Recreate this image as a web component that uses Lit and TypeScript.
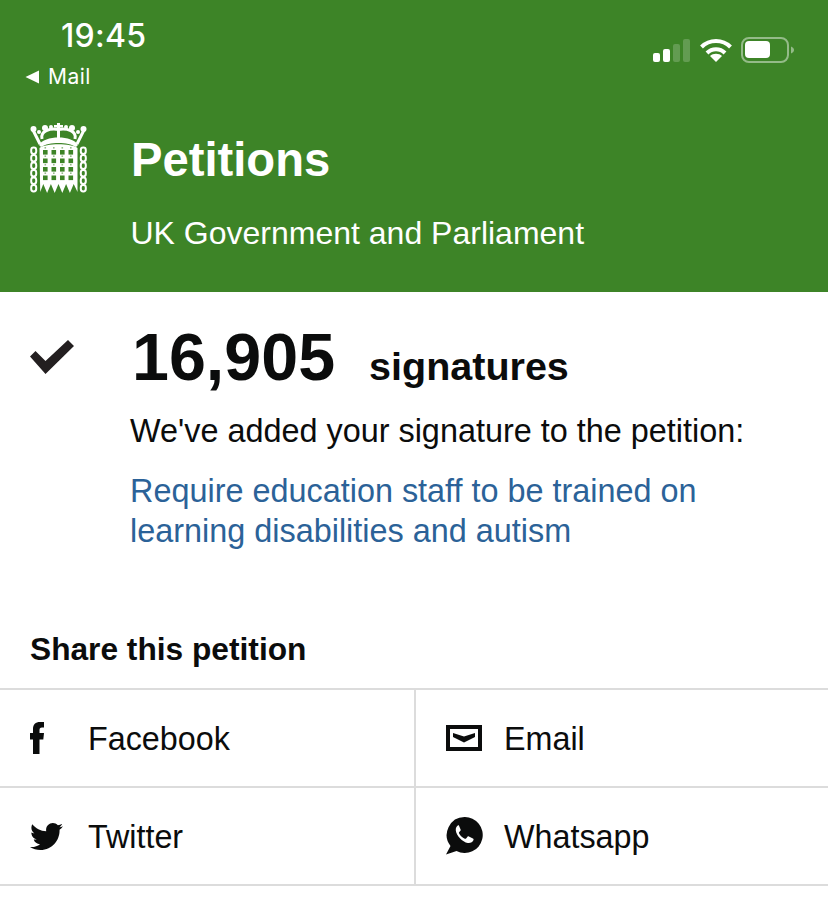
import { LitElement, html, css, svg } from "lit";
import { customElement } from "lit/decorators.js";

const GREEN = "#3d8427";
const holeXs = [13, 21.500, 30, 38.500];
const holeYs = [27, 35.500, 44, 52.500];

const portcullis = () => [
  ...holeYs.flatMap((y) =>
    holeXs.map((x) => svg`<rect x=${x} y=${y} width="4.600" height="4.600" fill=${GREEN}/>`)
  ),
  ...[24.800, 33.200, 41.700, 50.200].flatMap((y) =>
    [15.300, 23.800, 32.300, 40.800].map(
      (x) => svg`<rect x=${x - 0.8} y=${y - 0.8} width="1.600" height="1.600" fill=${GREEN} fill-opacity=".55"/>`
    )
  ),
];

const chain = (x: number) =>
  [0, 1, 2, 3, 4, 5].map(
    (i) => svg`<rect x=${x} y=${24.500 + i * 7.500} width="5" height="6.500" rx="2.400" fill="none" stroke="#fff" stroke-width="2"/>`
  );

@customElement("app-root")
export class AppRoot extends LitElement {
  static styles = css`
    :host {
      display: block;
      width: 828px;
      height: 899px;
      background: #fff;
      font-family: "Liberation Sans", Arial, sans-serif;
      color: #0b0c0c;
      overflow: hidden;
    }
    .header {
      height: 292px;
      box-sizing: border-box;
      background: #3d8427;
      color: #fff;
      display: flex;
      flex-direction: column;
    }
    .status {
      height: 112px;
      display: flex;
      justify-content: space-between;
      padding: 0 34px 0 25px;
    }
    .status-left {
      display: flex;
      flex-direction: column;
    }
    .time {
      font-family: Inter, sans-serif;
      font-size: 32px;
      font-weight: 500;
      line-height: 36px;
      padding: 18px 0 0 36px;
      letter-spacing: 0.3px;
    }
    .back {
      display: flex;
      align-items: center;
      gap: 8px;
      font-family: Inter, sans-serif;
      font-size: 21px;
      line-height: 24px;
      margin-top: 11px;
      letter-spacing: 0.45px;
    }
    .indicators {
      display: flex;
      align-items: center;
      gap: 9px;
      height: 30px;
      margin-top: 35px;
    }
    .brand {
      display: grid;
      grid-template-columns: 131px 1fr;
    }
    .logo {
      margin: 11px 0 0 30px;
      display: block;
    }
    .title {
      font-size: 47.200px;
      font-weight: 700;
      line-height: 54px;
      margin: 21px 0 0;
    }
    .sub {
      font-size: 32px;
      line-height: 38px;
      margin: 27px 0 0 -0.5px;
    }
    .main {
      display: grid;
      grid-template-columns: 131px 1fr;
      padding-top: 32px;
    }
    .check {
      margin: 16px 0 0 30px;
      display: block;
    }
    .count {
      display: flex;
      align-items: baseline;
      gap: 34px;
      line-height: 66px;
      font-weight: 700;
      padding-left: 1px;
    }
    .num {
      font-size: 66.400px;
    }
    .word {
      font-size: 39.500px;
    }
    .added {
      font-size: 32.400px;
      line-height: 40px;
      margin: 12px 0 0 -1px;
    }
    .link {
      display: block;
      color: #2b6298;
      font-size: 32.400px;
      line-height: 40px;
      margin: 20px 0 0 -1px;
      text-decoration: none;
    }
    .share {
      font-size: 31.700px;
      font-weight: 700;
      line-height: 36px;
      margin: 80px 0 21px 30px;
    }
    .grid {
      display: grid;
      grid-template-columns: 416px 1fr;
      border-top: 2px solid #dcdcdc;
    }
    .cell {
      height: 98px;
      box-sizing: border-box;
      border-bottom: 2px solid #dcdcdc;
      display: flex;
      align-items: center;
      font-size: 32.300px;
    }
    .cell.left {
      border-right: 2px solid #dcdcdc;
    }
    .cell span {
      padding-top: 2px;
    }
    .ico {
      width: 88px;
      flex: none;
      display: flex;
      padding-left: 30px;
      box-sizing: border-box;
    }
  `;

  render() {
    return html`
      <div class="header">
        <div class="status">
          <div class="status-left">
            <div class="time">19:45</div>
            <div class="back">
              <svg width="15" height="14" viewBox="0 0 15 14"><path d="M0.500 7 14 0.500v13z" fill="#fff"/></svg>
              <span>Mail</span>
            </div>
          </div>
          <div class="indicators">
            <svg width="38" height="23" viewBox="0 0 38 23">
              <rect x="0" y="14" width="7" height="9" rx="2" fill="#fff"/>
              <rect x="10" y="10" width="7" height="13" rx="2" fill="#fff"/>
              <rect x="20" y="5" width="7" height="18" rx="2" fill="#fff" fill-opacity=".2"/>
              <rect x="30" y="0" width="7" height="23" rx="2" fill="#fff" fill-opacity=".2"/>
            </svg>
            <svg width="32" height="24" viewBox="0 0 32 24" fill="none" stroke="#fff" stroke-width="4">
              <path d="M1.500 9C9.500 1 22.500 1 30.500 9"/>
              <path d="M7 15c5-5 13-5 18 0"/>
              <path d="M16 24l-6-6c3-3 9-3 12 0z" fill="#fff" stroke="none"/>
            </svg>
            <svg width="53" height="26" viewBox="0 0 53 26">
              <rect x="1" y="1" width="46" height="24" rx="7" fill="none" stroke="#fff" stroke-opacity=".45" stroke-width="2"/>
              <rect x="4" y="4" width="25" height="17" rx="4" fill="#fff"/>
              <path d="M50 9.500c2 .8 3 2 3 3.500s-1 2.700-3 3.500z" fill="#fff" fill-opacity=".45"/>
            </svg>
          </div>
        </div>
        <div class="brand">
          <svg class="logo" width="57" height="70" viewBox="0 0 57 70" fill="#fff">
            <g fill="none" stroke="#fff" stroke-width="3">
              <path d="M10 21L3 7"/>
              <path d="M47 21l7-14"/>
              <path d="M12 16C10 8 20 5 28.500 6.500 37 5 47 8 45 16"/>
              <path d="M28.500 0v15"/>
            </g>
            <path d="M24 2h9v2.500h-9z"/>
            <circle cx="3.500" cy="6" r="3"/><circle cx="9" cy="9" r="2"/><circle cx="15" cy="5" r="3"/><circle cx="21" cy="4" r="2"/>
            <circle cx="53.500" cy="6" r="3"/><circle cx="48" cy="9" r="2"/><circle cx="42" cy="5" r="3"/><circle cx="36" cy="4" r="2"/>
            <path d="M9 22C14 12 43 12 48 22l-2 2C38 18.500 19 18.500 11 24z"/>
            <path d="M9.500 25C16 20 41 20 47.500 25V69l-3.800-8-3.800 9-3.800-9-3.800 9-3.800-9-3.800 9-3.800-9-3.800 9-3.800-9-3.100 8z"/>
            ${portcullis()}
            ${chain(1.200)}${chain(50.800)}
          </svg>
          <div>
            <h1 class="title">Petitions</h1>
            <p class="sub">UK Government and Parliament</p>
          </div>
        </div>
      </div>
      <div class="main">
        <svg class="check" width="44" height="34" viewBox="0 0 44 34"><path d="M0 16.500 5.500 11l10 10L38 0l6 6-28.500 28z" fill="#231f20"/></svg>
        <div>
          <div class="count"><span class="num">16,905</span><span class="word">signatures</span></div>
          <p class="added">We've added your signature to the petition:</p>
          <a class="link">Require education staff to be trained on<br />learning disabilities and autism</a>
        </div>
      </div>
      <div class="share">Share this petition</div>
      <div class="grid">
        <div class="cell left">
          <div class="ico">
            <svg width="14" height="32" viewBox="0 0 14 32"><path d="M3 32V17.500H0V11h3V7c0-4.500 2.500-7 7-7H14v5.500h-2c-2 0-2.500 1-2.500 2.500v3H14l-.7 6.500H9.500V32z" fill="#0b0c0c"/></svg>
          </div>
          <span>Facebook</span>
        </div>
        <div class="cell right">
          <div class="ico">
            <svg width="36" height="26" viewBox="0 0 36 26"><path fill-rule="evenodd" d="M0 0h36v26H0zM4 4v18h28V4z" fill="#0b0c0c"/><path d="M7 8l11 3.500L29 8v4l-11 5.500L7 12z" fill="#0b0c0c"/></svg>
          </div>
          <span>Email</span>
        </div>
        <div class="cell left">
          <div class="ico">
            <svg width="33" height="27" viewBox="0 0 24 19.500"><path d="M24 2.300c-.9.400-1.800.7-2.800.8 1-.6 1.800-1.600 2.200-2.700-1 .6-2 1-3.100 1.200C19.300.6 18 0 16.600 0c-2.700 0-4.900 2.200-4.900 4.900 0 .4 0 .8.100 1.100C7.700 5.800 4.100 3.900 1.700.9c-.4.700-.7 1.600-.7 2.500 0 1.700.9 3.200 2.200 4.100-.8 0-1.600-.2-2.200-.6v.1c0 2.400 1.700 4.400 3.900 4.800-.4.100-.8.200-1.300.2-.3 0-.6 0-.9-.1.600 2 2.400 3.400 4.600 3.400-1.700 1.300-3.800 2.100-6.100 2.100-.4 0-.8 0-1.200-.1 2.200 1.400 4.800 2.200 7.500 2.200 9.100 0 14-7.500 14-14v-.6c1-.7 1.800-1.600 2.500-2.600z" fill="#0b0c0c"/></svg>
          </div>
          <span>Twitter</span>
        </div>
        <div class="cell right">
          <div class="ico">
            <svg width="38" height="38" viewBox="0 0 38 38">
              <path d="M18.500 0a18 18 0 1 1-8 34L0 37.500 4.500 29A18 18 0 0 1 18.500 0z" fill="#0b0c0c"/>
              <path d="M12.500 8c-2 1-3 3-2.700 5.500.6 5 6.500 11.500 12 12.500 2.500.4 5-.8 5.700-3 .2-.8 0-1.200-.6-1.500l-4-2c-.6-.3-1-.2-1.400.3l-1.400 1.700c-.4.400-.8.500-1.300.2-2.400-1-4.700-3.100-5.800-5.500-.2-.5-.1-.9.300-1.200l1.100-1.300c.4-.4.400-.8.200-1.300l-1.600-3.700c-.3-.7-.9-.9-1.700-.7z" fill="#fff"/>
            </svg>
          </div>
          <span>Whatsapp</span>
        </div>
      </div>
    `;
  }
}
